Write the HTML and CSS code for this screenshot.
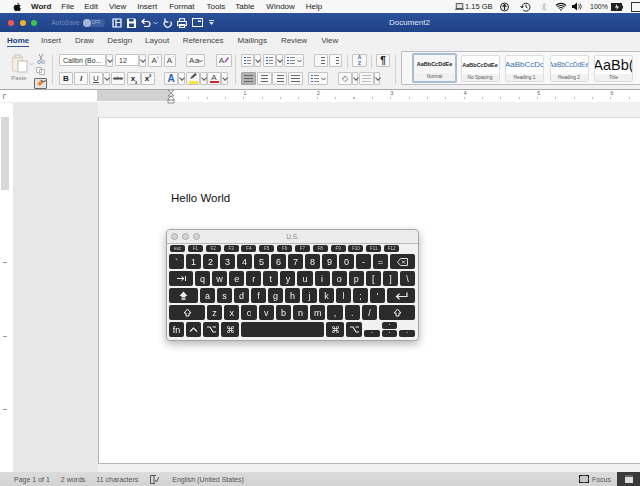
FILE: index.html
```html
<!DOCTYPE html>
<html lang="en">
<head>
    <meta charset="UTF-8">
    <title>Document2</title>
    <link rel="stylesheet" href="styles.css">
</head>
<body>
    <!-- menu bar -->
    <div class="menubar">
        <svg class="apple" viewBox="0 0 12 12"><path d="M8.300 1c.1 1-.9 2.200-2 2.100C6.200 2 7.300 1 8.300 1zM6.300 3.600c.6 0 1.100-.5 2-.5.8 0 1.500.4 2 1-1.600 1-1.300 3.200.4 3.900-.4 1.200-1.400 3-2.400 3-.7 0-.9-.4-1.800-.4s-1.200.4-1.800.4C3.500 11 2 8.700 2 6.600 2 4.500 3.300 3.200 4.500 3.200c.8 0 1.300.4 1.800.4z" fill="#111"/></svg>
        <span class="menu-app">Word</span>
        <span class="menu-file">File</span>
        <span class="menu-edit">Edit</span>
        <span class="menu-view">View</span>
        <span class="menu-insert">Insert</span>
        <span class="menu-format">Format</span>
        <span class="menu-tools">Tools</span>
        <span class="menu-table">Table</span>
        <span class="menu-window">Window</span>
        <span class="menu-help">Help</span>
        <div class="status-items">
            <svg width="11" height="9" viewBox="0 0 11 9"><rect x="1.500" y="1" width="8" height="6" fill="#e4e4e4" stroke="#333"/><path d="M0 8h11" stroke="#333"/></svg>
            <span class="disk">1.15 GB</span>
            <svg class="s-up" width="9" height="10" viewBox="0 0 9 10"><circle cx="4.500" cy="5" r="4" fill="none" stroke="#222"/><path d="M4.500 8V3M2.500 5l2-2.500L6.500 5" fill="none" stroke="#222" stroke-width="1.200"/></svg>
            <svg class="s-tm" width="11" height="10" viewBox="0 0 11 10"><path d="M2 5a4 4 0 1 1 1.200 3" fill="none" stroke="#222"/><path d="M6 2.500V5l1.500 1M0.500 4l1.500 2L3.500 4" fill="none" stroke="#222"/></svg>
            <svg class="s-bt" width="6" height="10" viewBox="0 0 6 10"><path d="M1 3l4 4-2 2V1l2 2-4 4" fill="none" stroke="#c4c4c4"/></svg>
            <svg class="s-wifi" width="12" height="9" viewBox="0 0 12 9"><path d="M1 3.500a7 7 0 0 1 10 0M2.500 5a5 5 0 0 1 7 0M4 6.500a2.600 2.600 0 0 1 4 0" fill="none" stroke="#111" stroke-width="1.100"/><circle cx="6" cy="8" r=".8" fill="#111"/></svg>
            <svg class="s-vol" width="10" height="9" viewBox="0 0 10 9"><path d="M0 3h2l3-2.500v8L2 6H0z" fill="#111"/><path d="M6.500 2.500a3 3 0 0 1 0 4M8 1.500a4.500 4.500 0 0 1 0 6" fill="none" stroke="#111" stroke-width=".8"/></svg>
            <span class="batt-pct">100%</span>
            <svg class="s-batt" width="12" height="8" viewBox="0 0 12 8"><rect width="11" height="8" fill="#222"/><rect x="11" y="2.500" width="1" height="3" fill="#222"/><path d="M6 1L4 4.500h2L5.500 7 8 3.500H6z" fill="#fff"/></svg>
            <svg class="s-input" width="9" height="10" viewBox="0 0 9 10"><rect x=".5" y=".5" width="9" height="9" fill="none" stroke="#333"/></svg>
        </div>
    </div>

    <!-- title bar -->
    <div class="titlebar">
        <i class="light red"></i><i class="light yellow"></i><i class="light green"></i>
        <span class="autosave">AutoSave</span>
        <span class="toggle"><i></i>OFF</span>
        <svg class="q-first" width="10" height="10" viewBox="0 0 10 10"><path d="M1 1h8v8H1zM4 1v8M4 4.500h5" fill="none" stroke="#fff" stroke-width="1.200"/></svg>
        <svg class="q-icon" width="9" height="10" viewBox="0 0 9 10"><path d="M0 .5h8l1 1V10H0z" fill="#fff"/><rect x="2" y="1" width="4.500" height="2.500" fill="#25488f"/><rect x="2" y="5.500" width="5" height="3.500" fill="#25488f"/></svg>
        <svg class="q-icon" width="10" height="10" viewBox="0 0 10 10"><path d="M3.500 1L1 3.500 3.500 6M1 3.500h5.500a2.500 2.500 0 0 1 0 5H3" fill="none" stroke="#fff" stroke-width="1.200"/></svg>
        <svg class="q-chev" width="5" height="4" viewBox="0 0 5 4"><path d="M.5 1l2 2 2-2" fill="none" stroke="#b7c6e2"/></svg>
        <svg class="q-redo" width="9" height="10" viewBox="0 0 9 10"><path d="M7.500 3.500a3.500 3.500 0 1 1-5-.5M2 .5V3.800h3.300" fill="none" stroke="#fff" stroke-width="1.200"/></svg>
        <svg class="q-icon" width="10" height="10" viewBox="0 0 10 10"><path d="M2.500 3.500V.8h5v2.700M.6 3.500h8.800v4H.6zM2.500 6.500h5v3h-5z" fill="none" stroke="#fff" stroke-width="1.100"/></svg>
        <svg class="q-icon" width="11" height="9" viewBox="0 0 11 9"><rect x=".5" y=".5" width="10" height="8" fill="none" stroke="#fff"/><rect x="6" y="2.500" width="3" height="1.500" fill="#fff"/></svg>
        <svg class="q-more" width="5" height="6" viewBox="0 0 5 6"><path d="M0 0h5v1H0zM0 2h5L2.500 5z" fill="#d5deef"/></svg>
        <span class="doc-name">Document2</span>
    </div>

    <!-- ribbon tabs -->
    <div class="tabs">
        <span class="tab tab-home">Home</span>
        <span class="tab tab-insert">Insert</span>
        <span class="tab tab-draw">Draw</span>
        <span class="tab tab-design">Design</span>
        <span class="tab tab-layout">Layout</span>
        <span class="tab tab-refs">References</span>
        <span class="tab tab-mail">Mailings</span>
        <span class="tab tab-review">Review</span>
        <span class="tab tab-view">View</span>
    </div>

    <!-- ribbon -->
    <div class="ribbon">
        <div class="paste-group">
            <div class="paste-col">
                <svg width="17" height="19" viewBox="0 0 17 19"><path d="M1.500 3h10v14h-10z" fill="#f4eee2" stroke="#d4cdbd"/><rect x="4" y="1" width="5" height="3" fill="#e8e8e8" stroke="#c8c8c8"/><rect x="7" y="7" width="9" height="11" fill="#fff" stroke="#bdbdbd"/></svg>
                <span class="paste-label">Paste</span>
            </div>
            <svg class="paste-chev" width="5" height="4" viewBox="0 0 5 4"><path d="M.5 1l2 2 2-2" fill="none" stroke="#bbb"/></svg>
            <div class="paste-tools">
                <svg width="8" height="10" viewBox="0 0 8 10"><path d="M2 0l3 6M6 0L3 6" stroke="#9a9a9a" fill="none"/><circle cx="2" cy="8" r="1.500" fill="none" stroke="#8fa7c4"/><circle cx="6" cy="8" r="1.500" fill="none" stroke="#8fa7c4"/></svg>
                <svg width="9" height="8" viewBox="0 0 9 8"><path d="M.5.500h5v5h-5zM3.500 2.500h5v5h-5z" fill="#fafafa" stroke="#b4b4b4"/></svg>
                <span class="painter"><svg width="10" height="9" viewBox="0 0 10 9"><path d="M1 5l4-4 3 2-4 4z" fill="#e8883a"/><path d="M5 1l3 2 1.500-2" fill="none" stroke="#555"/></svg></span>
            </div>
        </div>
        <i class="sep"></i>

        <div class="rb-col font-col">
            <div class="rb-row">
                <span class="field w47">Calibri (Bo...</span><span class="btn w7 chev"></span>
                <span class="field w24 ml2">12</span><span class="btn w7 chev"></span>
                <span class="btn w14 ml2 glyph">A<sup>^</sup></span>
                <span class="btn w12 ml2 glyph">A<sup>ˇ</sup></span>
                <span class="btn w19 ml10 glyph aa">Aa<svg class="in-chev" width="5" height="4" viewBox="0 0 5 4"><path d="M.5 1l2 2 2-2" fill="none" stroke="#555"/></svg></span>
                <span class="btn w16 ml11 glyph">A<svg width="5" height="6" viewBox="0 0 5 6"><path d="M0 6l1-2 3-4 1 1-3 4z" fill="#a63fa8"/></svg></span>
            </div>
            <div class="rb-row">
                <span class="btn w14 glyph strong">B</span>
                <span class="btn w14 ml1 glyph italic">I</span>
                <span class="btn w14 ml1 glyph under">U</span><span class="btn w7 chev"></span>
                <span class="btn w14 ml1 glyph strike">abc</span>
                <span class="btn w14 ml2 glyph strong">x<sub>2</sub></span>
                <span class="btn w14 glyph strong">x<sup>2</sup></span>
                <span class="btn w14 ml9 glyph effect">A</span><span class="btn w7 chev"></span>
                <span class="btn w14 ml1 glyph hl"><svg width="8" height="6" viewBox="0 0 8 6"><path d="M1 6l1-2 4-4 2 1.500L4 5z" fill="#555"/></svg></span><span class="btn w7 chev"></span>
                <span class="btn w14 glyph color">A</span><span class="btn w7 chev"></span>
            </div>
        </div>
        <i class="sep"></i>

        <div class="rb-col para-col">
            <div class="rb-row">
                <span class="btn w13 lines bullets"></span><span class="btn w7 chev"></span>
                <span class="btn w13 ml2 lines bullets"></span><span class="btn w7 chev"></span>
                <span class="btn w20 ml1 lines bullets short"><svg class="in-chev" width="5" height="4" viewBox="0 0 5 4"><path d="M.5 1l2 2 2-2" fill="none" stroke="#555"/></svg></span>
                <span class="btn w14 ml10 lines indented"></span>
                <span class="btn w13 ml1 lines indented"></span>
                <i class="sep-s"></i>
                <span class="btn w15 glyph sort">A<br>Z</span>
                <i class="sep-s sep-s2"></i>
                <span class="btn w14 glyph pilcrow">¶</span>
            </div>
            <div class="rb-row">
                <span class="btn w15 lines active"></span>
                <span class="btn w15 ml1 lines center"></span>
                <span class="btn w15 lines right"></span>
                <span class="btn w15 ml1 lines"></span>
                <span class="btn w20 ml5 lines bullets short"><svg class="in-chev" width="5" height="4" viewBox="0 0 5 4"><path d="M.5 1l2 2 2-2" fill="none" stroke="#555"/></svg></span>
                <span class="btn w14 ml10 glyph">◇</span><span class="btn w6 chev"></span>
                <span class="btn w15 ml1 lines pale"></span><span class="btn w6 chev"></span>
            </div>
        </div>
        <i class="sep sep-c"></i>

        <div class="gallery">
            <div class="style-card selected"><span class="sample s-normal">AaBbCcDdEe</span><span class="style-name">Normal</span></div>
            <div class="style-card"><span class="sample s-normal">AaBbCcDdEe</span><span class="style-name">No Spacing</span></div>
            <div class="style-card"><span class="sample s-h1">AaBbCcDc</span><span class="style-name">Heading 1</span></div>
            <div class="style-card"><span class="sample s-h2">AaBbCcDdEe</span><span class="style-name">Heading 2</span></div>
            <div class="style-card"><span class="sample s-title">AaBb(</span><span class="style-name">Title</span></div>
        </div>
    </div>

    <!-- horizontal ruler -->
    <div class="ruler">
        <span class="tab-stop">┌</span>
        <div class="ruler-grey"></div>
        <div class="ruler-white">
            <span>1</span><span>2</span><span>3</span><span>4</span><span>5</span><span>6</span>
        </div>
        <svg class="indent" width="8" height="14" viewBox="0 0 8 14"><path d="M1 0h6L1 6h6zM4 6l3 3v4H1V9z" fill="#fff" stroke="#777" stroke-width=".8"/><path d="M1 10h6" stroke="#777"/></svg>
    </div>

    <!-- document area -->
    <div class="main">
        <div class="vruler">
            <div class="vruler-grey"></div>
            <div class="vruler-white"><span></span><span></span><span></span></div>
        </div>
        <div class="canvas">
            <div class="page">
                <p class="hello">Hello World</p>
            </div>
        </div>
    </div>

    <!-- status bar -->
    <div class="statusbar">
        <span class="st-page">Page 1 of 1</span>
        <span class="st-words">2 words</span>
        <span class="st-chars">11 characters</span>
        <svg class="st-book" width="9" height="9" viewBox="0 0 9 9"><path d="M.5.500h3.500v8H.5zM4 .5h2M4 8.500h1M5.500 5l1 2L9 2" fill="none" stroke="#555"/></svg>
        <span class="st-lang">English (United States)</span>
        <svg class="st-focus" width="10" height="8" viewBox="0 0 10 8"><rect x=".5" y=".5" width="9" height="7" fill="#c9c9c9" stroke="#444"/><path d="M.5 3V.5H3M7 .5h2.500V3M.5 5v2.500H3M7 7.500h2.500V5" fill="none" stroke="#111"/></svg>
        <span class="st-focus-label">Focus</span>
        <span class="st-layout"><i></i></span>
    </div>

    <!-- keyboard viewer window -->
    <div class="kb-window">
        <div class="kb-title">
            <i></i><i></i><i></i>
            <span>U.S.</span>
        </div>
        <div class="kb-fn">
            <span>esc</span><span>F1</span><span>F2</span><span>F3</span><span>F4</span><span>F5</span><span>F6</span><span>F7</span><span>F8</span><span>F9</span><span>F10</span><span>F11</span><span>F12</span>
        </div>
        <div class="kb-row">
            <span>`</span><span>1</span><span>2</span><span>3</span><span>4</span><span>5</span><span>6</span><span>7</span><span>8</span><span>9</span><span>0</span><span>-</span><span>=</span>
            <span class="k25"><svg width="11" height="8" viewBox="0 0 11 8"><path d="M3.500.5h7v7h-7L.5 4z" fill="none" stroke="#ddd"/><path d="M5 2.500l3 3M8 2.500l-3 3" stroke="#ddd"/></svg></span>
        </div>
        <div class="kb-row">
            <span class="k24"><svg width="9" height="7" viewBox="0 0 9 7"><path d="M0 3.500h7M4.500 1.500l2.500 2-2.500 2M8.500 1v5" fill="none" stroke="#eee"/></svg></span>
            <span>q</span><span>w</span><span>e</span><span>r</span><span>t</span><span>y</span><span>u</span><span>i</span><span>o</span><span>p</span><span>[</span><span>]</span><span>\</span>
        </div>
        <div class="kb-row">
            <span class="k29"><svg width="9" height="9" viewBox="0 0 9 9"><path d="M4.500.5L8.500 5H6.500v1.500h-4V5H.5z" fill="#eee"/><rect x="2.500" y="7.300" width="4" height="1.500" fill="#eee"/></svg></span>
            <span>a</span><span>s</span><span>d</span><span>f</span><span>g</span><span>h</span><span>j</span><span>k</span><span>l</span><span>;</span><span>'</span>
            <span class="k28"><svg width="13" height="8" viewBox="0 0 13 8"><path d="M12 .5v4H2M4.500 1.800L1.500 4.500l3 2.700" fill="none" stroke="#eee" stroke-width="1.200"/></svg></span>
        </div>
        <div class="kb-row">
            <span class="k36"><svg width="9" height="9" viewBox="0 0 9 9"><path d="M4.500 1L8 5H6v3H3V5H1z" fill="none" stroke="#eee"/></svg></span>
            <span>z</span><span>x</span><span>c</span><span>v</span><span>b</span><span>n</span><span>m</span><span>,</span><span>.</span><span>/</span>
            <span class="k36"><svg width="9" height="9" viewBox="0 0 9 9"><path d="M4.500 1L8 5H6v3H3V5H1z" fill="none" stroke="#eee"/></svg></span>
        </div>
        <div class="kb-row">
            <span class="k15">fn</span>
            <span class="k15"><svg width="9" height="5" viewBox="0 0 9 5"><path d="M1 4.500L4.500 1 8 4.500" fill="none" stroke="#eee" stroke-width="1.200"/></svg></span>
            <span class="k16"><svg width="9" height="7" viewBox="0 0 9 7"><path d="M0 1h3l3 5h3M5.500 1H9" fill="none" stroke="#eee" stroke-width="1.100"/></svg></span>
            <span class="k18">⌘</span>
            <span class="k83"></span>
            <span class="k18">⌘</span>
            <span class="k16"><svg width="9" height="7" viewBox="0 0 9 7"><path d="M0 1h3l3 5h3M5.500 1H9" fill="none" stroke="#eee" stroke-width="1.100"/></svg></span>
            <div class="arrows">
                <span class="arrow-key">.</span>
                <div class="arrow-mid"><b class="arrow-key">.</b><b class="arrow-key">.</b></div>
                <span class="arrow-key">.</span>
            </div>
        </div>
    </div>
</body>
</html>
```

FILE: styles.css
```css
* {
    box-sizing: border-box;
}

body {
    margin: 0;
    width: 640px;
    height: 486px;
    overflow: hidden;
    position: relative;
    display: flex;
    flex-direction: column;
    background: #fff;
    color: #333;
    font-family: "Liberation Sans", Arial, sans-serif;
}

/* menu bar */
.menubar {
    height: 13px;
    background: #f7f7f7;
    display: flex;
    align-items: center;
    font-size: 8px;
    color: #222;
    flex: none;
    white-space: nowrap;
}

.apple {
    width: 10px;
    height: 10px;
    margin-left: 12px;
}

.menu-app { margin-left: 9px; font-weight: bold; }
.menu-file { margin-left: 10px; }
.menu-edit { margin-left: 10px; }
.menu-view { margin-left: 11px; }
.menu-insert { margin-left: 11px; }
.menu-format { margin-left: 12px; }
.menu-tools { margin-left: 12px; }
.menu-table { margin-left: 10px; }
.menu-window { margin-left: 12px; }
.menu-help { margin-left: 11px; }

.status-items {
    margin-left: auto;
    width: 185px;
    flex: none;
    display: flex;
    align-items: center;
    overflow: hidden;
}

.disk { margin-left: 1px; width: 27px; flex: none; font-size: 7.500px; }
.s-up { margin-left: 8px; flex: none; }
.s-tm { margin-left: 11px; flex: none; }
.s-bt { margin-left: 10px; flex: none; }
.s-wifi { margin-left: 8px; flex: none; }
.s-vol { margin-left: 5px; flex: none; }
.batt-pct { margin-left: 8px; width: 18px; flex: none; font-size: 7px; }
.s-batt { margin-left: 3px; flex: none; }
.s-input { margin-left: 8px; flex: none; }

/* title bar */
.titlebar {
    height: 19px;
    flex: none;
    background: linear-gradient(#2c5199, #1f4287);
    display: flex;
    align-items: center;
    padding-left: 8px;
    color: #fff;
}

.light {
    width: 6px;
    height: 6px;
    border-radius: 50%;
    margin-right: 5.500px;
}

.red { background: #ee5a50; }
.yellow { background: #f0b02e; }
.green { background: #3cc04a; }

.autosave {
    margin-left: 9px;
    width: 28px;
    flex: none;
    font-size: 6.500px;
    color: #6f8bbd;
}

.toggle {
    margin-left: 3px;
    width: 22px;
    height: 8px;
    border-radius: 4px;
    background: #3c5f9f;
    font-size: 4.500px;
    color: #a9bbdb;
    display: flex;
    align-items: center;
    gap: 1px;
    flex: none;
}

.toggle i {
    width: 8px;
    height: 8px;
    border-radius: 50%;
    background: #a5b6d6;
}

.q-first { margin-left: 7px; }
.q-icon { margin-left: 5px; }
.q-chev { margin-left: 2px; }
.q-redo { margin-left: 5px; }
.q-more { margin-left: 6px; }

.doc-name {
    position: absolute;
    left: 389px;
    top: 18px;
    font-size: 8px;
    color: #dfe7f4;
}

/* tabs */
.tabs {
    height: 20px;
    flex: none;
    background: #f1f1f1;
    display: flex;
    align-items: flex-start;
    padding-top: 4px;
    font-size: 8px;
    color: #444;
    padding-left: 7px;
}

.tab { flex: none; }

.tab-home {
    color: #1f3f7f;
    font-weight: bold;
    border-bottom: 1px solid #2c5199;
    padding-bottom: 1px;
    width: 22px;
}

.tab-insert { margin-left: 12px; }
.tab-draw { margin-left: 14px; }
.tab-design { margin-left: 13.500px; }
.tab-layout { margin-left: 13px; }
.tab-refs { margin-left: 13.500px; }
.tab-mail { margin-left: 14px; }
.tab-review { margin-left: 14px; }
.tab-view { margin-left: 14px; }

/* ribbon */
.ribbon {
    height: 38px;
    flex: none;
    background: #f1f1f1;
    border-bottom: 1px solid #a8a8a8;
    display: flex;
    align-items: flex-start;
}

.paste-group {
    width: 52px;
    display: flex;
    padding: 2px 0 0 9px;
    flex: none;
}

.paste-col {
    width: 20px;
    display: flex;
    flex-direction: column;
    align-items: center;
    flex: none;
}

.paste-label {
    font-size: 6px;
    color: #888;
    margin-top: 2px;
}

.paste-chev {
    margin: 8px 0 0 0;
    flex: none;
}

.paste-tools {
    display: flex;
    flex-direction: column;
    align-items: center;
    gap: 3px;
    flex: none;
}

.painter {
    width: 13px;
    height: 11px;
    border: 1px solid #666;
    border-radius: 1px;
    background: #e6e6e6;
    display: flex;
    align-items: center;
    justify-content: center;
}

.sep {
    width: 1px;
    height: 30px;
    background: #d2d2d2;
    margin-top: 2px;
    flex: none;
}

.sep-s {
    width: 1px;
    height: 14px;
    background: #d2d2d2;
    margin: 0 4px 0 5px;
    flex: none;
}

.sep-s2 {
    margin: 0 4px;
}

.rb-col {
    display: flex;
    flex-direction: column;
    gap: 5px;
    padding-top: 2px;
    flex: none;
}

.font-col { margin-left: 6px; width: 176px; }
.para-col { margin-left: 5px; width: 154px; }

.rb-row {
    display: flex;
    height: 13px;
}

.field {
    height: 12px;
    background: #fff;
    border: 1px solid #c5c5c5;
    border-radius: 1px;
    font-size: 7px;
    padding-left: 3px;
    line-height: 11px;
    white-space: nowrap;
    overflow: hidden;
    color: #333;
    flex: none;
}

.btn {
    height: 13px;
    background: #f8f8f8;
    border: 1px solid #c4c4c4;
    border-radius: 1px;
    flex: none;
    position: relative;
}

.w6 { width: 6px; }
.w7 { width: 7px; }
.w12 { width: 12px; }
.w13 { width: 13px; }
.w14 { width: 14px; }
.w15 { width: 15px; }
.w16 { width: 16px; }
.w19 { width: 19px; }
.w20 { width: 20px; }
.w24 { width: 24px; }
.w47 { width: 47px; }

.ml1 { margin-left: 1px; }
.ml2 { margin-left: 2px; }
.ml5 { margin-left: 5px; }
.ml9 { margin-left: 9px; }
.ml10 { margin-left: 10px; }
.ml11 { margin-left: 11px; }

.chev::after {
    content: "";
    position: absolute;
    left: 1px;
    top: 3px;
    width: 3px;
    height: 3px;
    border-right: 1px solid #555;
    border-bottom: 1px solid #555;
    transform: rotate(45deg);
}

.in-chev {
    position: absolute;
    right: 1px;
    top: 4px;
}

.glyph {
    font-size: 8px;
    text-align: center;
    line-height: 11px;
    color: #444;
    overflow: hidden;
    white-space: nowrap;
}

.glyph sup,
.glyph sub {
    font-size: 4px;
    line-height: 0;
}

.strong { font-weight: bold; color: #222; }
.italic { font-style: italic; font-weight: bold; }
.under { text-decoration: underline; color: #444; }
.strike { text-decoration: line-through; font-size: 6px; }
.effect { color: #2b62c0; font-weight: bold; font-size: 10px; }
.aa { letter-spacing: .5px; text-align: left; padding-left: 2px; }
.pilcrow { font-size: 10px; font-weight: bold; color: #222; }
.sort { font-size: 5px; line-height: 5.500px; font-weight: bold; color: #2b62c0; }

.hl {
    background: linear-gradient(#f5e636, #f5e636) center 8px / 9px 3px no-repeat #f8f8f8;
    line-height: 8px;
}

.color {
    background: linear-gradient(#d6252b, #d6252b) center 8px / 9px 2px no-repeat #f8f8f8;
    line-height: 9px;
}

/* paragraph lines */
.lines::after {
    content: "";
    position: absolute;
    left: 2px;
    right: 2px;
    top: 2px;
    height: 7px;
    background: repeating-linear-gradient(#666 0 1px, transparent 1px 3px);
}

.bullets::after {
    left: 5px;
    background: repeating-linear-gradient(#888 0 1px, transparent 1px 3px);
}

.bullets::before {
    content: "";
    position: absolute;
    left: 2px;
    top: 2px;
    width: 2px;
    height: 7px;
    background: repeating-linear-gradient(#2b62c0 0 1px, transparent 1px 3px);
}

.short::after { right: 8px; }
.indented::after { left: 6px; }
.pale::after { background: repeating-linear-gradient(#bbb 0 1px, transparent 1px 3px); }
.center::after { left: 3px; right: 3px; }
.right::after { left: 4px; right: 2px; }
.active { background: #b3b3b3; border-color: #a5a5a5; }

/* style gallery */
.gallery {
    margin-left: 5px;
    margin-top: -1px;
    width: 239px;
    height: 34px;
    background: #f8f8f8;
    border: 1px solid #bdbdbd;
    border-right: none;
    border-radius: 2px 0 0 2px;
    display: flex;
    padding: 1px 0 0 10px;
    gap: 5.500px;
    overflow: hidden;
    flex: none;
}

.style-card {
    width: 39px;
    height: 27px;
    margin-top: 2px;
    background: #fff;
    border: 1px solid #ddd;
    border-radius: 2px;
    display: flex;
    flex-direction: column;
    align-items: center;
    overflow: hidden;
    flex: none;
}

.style-card.selected {
    width: 45px;
    height: 30px;
    margin: 0 -2px 0 0;
    border: 2px solid #a9bcd8;
    background: #f6f6f6;
}

.sample {
    height: 18px;
    line-height: 18px;
    white-space: nowrap;
    color: #222;
}

.s-normal { font-size: 5.500px; font-weight: bold; }
.s-h1 { font-size: 8px; color: #3a6cae; }
.s-h2 { font-size: 6.500px; color: #3a6cae; }
.s-title { font-size: 14.500px; color: #111; }

.style-name {
    width: 100%;
    flex: 1;
    text-align: center;
    font-size: 4.800px;
    line-height: 8px;
    color: #555;
    background: #f1f1f1;
}

/* rulers */
.ruler {
    height: 13px;
    flex: none;
    display: flex;
    background: #fff;
    position: relative;
    border-bottom: 1px solid #eee;
}

.tab-stop {
    width: 97px;
    font-size: 7px;
    line-height: 10px;
    padding-left: 1px;
    color: #222;
    flex: none;
}

.ruler-grey {
    width: 73px;
    height: 11px;
    flex: none;
    background: #d2d2d2;
}

.ruler-white {
    flex: 1;
    height: 11px;
    display: flex;
    padding-left: 3px;
    background: repeating-linear-gradient(90deg, #b8b8b8 0 1px, transparent 1px 18.350px) 0 7px / 100% 2px no-repeat #fff;
    font-size: 5px;
    line-height: 7px;
    color: #555;
}

.ruler-white span {
    width: 73.400px;
    text-align: right;
    flex: none;
}

.indent {
    position: absolute;
    left: 167px;
    top: 0;
}

.main {
    flex: 1;
    display: flex;
    min-height: 0;
}

.vruler {
    width: 13px;
    flex: none;
    background: #fff;
    padding: 14px 4px 0 1px;
    display: flex;
    flex-direction: column;
}

.vruler-grey {
    height: 73px;
    background: #d8d8d8;
    flex: none;
}

.vruler-white {
    flex: 1;
    display: flex;
    flex-direction: column;
}

.vruler-white span {
    height: 73.400px;
    flex: none;
    border-bottom: 1px solid #999;
    margin: 0 2px;
}

.canvas {
    flex: 1;
    padding-top: 14px;
    padding-bottom: 8px;
    background: linear-gradient(#e8e8e8, #e8e8e8) 0 0 / 85px 100% no-repeat, #f1f1f1;
    display: flex;
    justify-content: flex-end;
}

.page {
    width: 542px;
    background: #fff;
    border-left: 1px solid #b5b5b5;
    border-top: 1px solid #d8d8d8;
    border-bottom: 1px solid #b5b5b5;
    padding: 73px 0 0 72px;
}

.hello {
    margin: 0;
    font-size: 11.500px;
    line-height: 14px;
    color: #111;
}

/* status bar */
.statusbar {
    height: 14px;
    flex: none;
    background: linear-gradient(#dcdcdc, #d2d2d2);
    display: flex;
    align-items: center;
    font-size: 7px;
    color: #555;
    padding-left: 14px;
}

.st-words { margin-left: 11px; }
.st-chars { margin-left: 11px; }
.st-book { margin-left: 12px; }
.st-lang { margin-left: 13px; }
.st-focus { margin-left: auto; }
.st-focus-label { margin-left: 3px; }

.st-layout {
    margin-left: 6px;
    width: 23px;
    height: 14px;
    background: #3a3a3a;
    display: flex;
    align-items: center;
    justify-content: center;
}

.st-layout i {
    width: 8px;
    height: 8px;
    background: linear-gradient(#666 0 2px, #ddd 2px);
}

/* keyboard viewer */
.kb-window {
    position: absolute;
    left: 166px;
    top: 229px;
    width: 253px;
    height: 112px;
    background: #f1f1f1;
    border: 1px solid #a5a5a5;
    border-radius: 4px;
    box-shadow: 0 3px 8px rgba(0, 0, 0, 0.3);
    padding: 0 2px;
    will-change: transform;
}

.kb-title {
    height: 14px;
    margin: 0 -2px;
    border-bottom: 1px solid #bbb;
    background: #ececec;
    border-radius: 4px 4px 0 0;
    display: flex;
    align-items: center;
    padding-left: 4px;
    gap: 4px;
    position: relative;
}

.kb-title i {
    width: 7px;
    height: 7px;
    border-radius: 50%;
    background: #d4d4d4;
    border: 1px solid #aaa;
}

.kb-title span {
    position: absolute;
    left: 0;
    right: 0;
    text-align: center;
    font-size: 6.500px;
    color: #888;
}

.kb-fn {
    display: flex;
    gap: 2.850px;
    margin: 1px 0 0 1px;
    height: 7px;
}

.kb-fn span {
    width: 15px;
    background: #2b2b2b;
    border-radius: 2px;
    color: #ccc;
    font-size: 4.500px;
    line-height: 7px;
    text-align: center;
    flex: none;
}

.kb-row {
    display: flex;
    gap: 2px;
    height: 15px;
    margin-top: 2px;
    width: 246px;
}

.kb-row > span {
    flex: 1 1 0;
    min-width: 0;
    background: #2b2b2b;
    border-radius: 2px;
    color: #f2f2f2;
    font-size: 9px;
    display: flex;
    align-items: center;
    justify-content: center;
}

.kb-row > .k15 { flex: 0 0 15px; }
.kb-row > .k16 { flex: 0 0 16px; }
.kb-row > .k18 { flex: 0 0 18px; }
.kb-row > .k24 { flex: 0 0 24px; }
.kb-row > .k25 { flex: 0 0 25px; }
.kb-row > .k28 { flex: 0 0 28px; }
.kb-row > .k29 { flex: 0 0 29px; }
.kb-row > .k36 { flex: 0 0 36px; }
.kb-row > .k83 { flex: 0 0 83px; }

.arrows {
    flex: 1;
    display: flex;
    gap: 2px;
    align-items: flex-end;
}

.arrow-key {
    flex: 1;
    height: 7px;
    background: #2b2b2b;
    border-radius: 2px;
    color: #eee;
    font-size: 6px;
    line-height: 3px;
    font-weight: bold;
    text-align: center;
    display: block;
}

.arrow-mid {
    flex: 1;
    align-self: stretch;
    display: flex;
    flex-direction: column;
    gap: 1px;
}
```
